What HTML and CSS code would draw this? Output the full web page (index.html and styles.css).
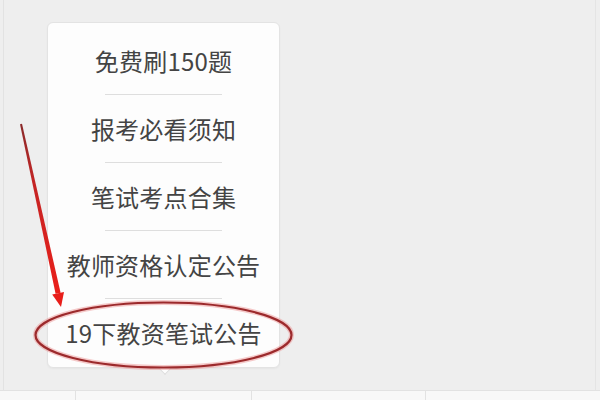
FILE: index.html
```html
<!DOCTYPE html>
<html lang="zh">
<head>
<meta charset="utf-8">
<link rel="stylesheet" href="styles.css">
</head>
<body>
<div class="screen">
  <div class="stage">
    <div class="menu">
      <div class="item">免费刷150题</div>
      <div class="sep"></div>
      <div class="item">报考必看须知</div>
      <div class="sep"></div>
      <div class="item">笔试考点合集</div>
      <div class="sep"></div>
      <div class="item">教师资格认定公告</div>
      <div class="sep"></div>
      <div class="item">19下教资笔试公告</div>
    </div>
  </div>
  <div class="tabbar">
    <div class="tab"></div>
    <div class="tab"></div>
    <div class="tab"></div>
    <div class="tab"></div>
  </div>
</div>
<svg class="marks" width="600" height="400" viewBox="0 0 600 400">
  <ellipse cx="163.5" cy="335" rx="128" ry="32.5" fill="none" stroke="rgba(235,140,140,0.45)" stroke-width="5"/>
  <ellipse cx="163.5" cy="335" rx="128" ry="32.5" fill="none" stroke="#9c2a2c" stroke-width="2.2"/>
  <defs>
    <linearGradient id="ar" x1="0" y1="0" x2="0" y2="1">
      <stop offset="0" stop-color="#8a2a2a"/>
      <stop offset="0.35" stop-color="#c42424"/>
      <stop offset="1" stop-color="#ea1f1a"/>
    </linearGradient>
  </defs>
  <polygon points="22,123.8 20,124.2 55.6,293.8 60.6,292.8" fill="url(#ar)"/>
  <polygon points="61,307 52.2,294.5 64,292.1" fill="#e81e1a"/>
</svg>
</body>
</html>
```
FILE: styles.css
```css
html, body {
  margin: 0;
  padding: 0;
}
body {
  width: 600px;
  height: 400px;
  background: #eeeeee;
  font-family: "Noto Sans CJK SC", "Noto Sans", sans-serif;
  overflow: hidden;
  position: relative;
}
.screen {
  width: 600px;
  height: 400px;
  display: flex;
  flex-direction: column;
}
.stage {
  height: 390px;
  margin: 0 4px 0 3px;
  border-left: 1px solid #e2e2e2;
  border-right: 1px solid #e4e4e4;
  box-sizing: border-box;
  padding-top: 22px;
  padding-left: 43px;
}
.menu {
  width: 233px;
  box-sizing: border-box;
  background: #fdfdfd;
  border: 1px solid #e3e3e3;
  border-radius: 6px;
  padding: 4px 0 1px;
  display: flex;
  flex-direction: column;
  position: relative;
  box-shadow: 0 1px 2px rgba(0,0,0,0.04);
}
.menu::after {
  content: "";
  position: absolute;
  left: 112px;
  bottom: -6px;
  width: 9px;
  height: 9px;
  background: #fdfdfd;
  border-right: 1px solid #dcdcdc;
  border-bottom: 1px solid #dcdcdc;
  transform: rotate(45deg);
}
.item {
  height: 67px;
  display: flex;
  align-items: center;
  justify-content: center;
  font-size: 24px;
  color: #444444;
  letter-spacing: 0.2px;
}
.sep {
  height: 1px;
  width: 117px;
  margin: 0 auto;
  background: #dedede;
}
.tabbar {
  height: 10px;
  display: grid;
  grid-template-columns: 75px 176px 174px 175px;
  background: #f8f8f8;
  border-top: 1px solid #e2e2e2;
  box-sizing: border-box;
}
.tab + .tab {
  border-left: 1px solid #e2e2e2;
}
.marks {
  position: absolute;
  left: 0;
  top: 0;
  pointer-events: none;
}
```
